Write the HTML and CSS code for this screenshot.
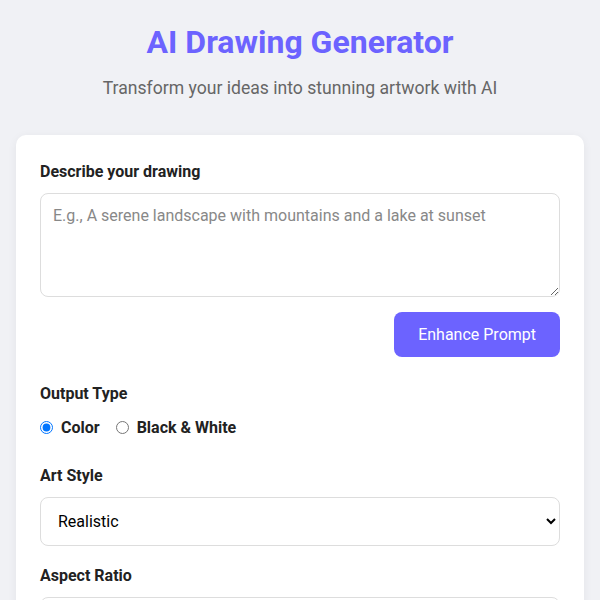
FILE: index.html
```html
<!DOCTYPE html>
<html lang="en">
<head>
<meta charset="utf-8">
<title>AI Drawing Generator</title>
<link rel="stylesheet" href="styles.css">
</head>
<body>
<div class="container">
  <header class="header">
    <h1 class="title">AI Drawing Generator</h1>
    <p class="subtitle">Transform your ideas into stunning artwork with AI</p>
  </header>
  <main class="card">
    <div class="field field-prompt">
      <label class="field-label" for="prompt">Describe your drawing</label>
      <textarea id="prompt" class="textarea" placeholder="E.g., A serene landscape with mountains and a lake at sunset"></textarea>
      <div class="actions">
        <button class="btn-primary" type="button">Enhance Prompt</button>
      </div>
    </div>
    <div class="field">
      <span class="field-label">Output Type</span>
      <div class="radio-row">
        <label class="radio-option"><input type="radio" name="type" checked> Color</label>
        <label class="radio-option"><input type="radio" name="type"> Black &amp; White</label>
      </div>
    </div>
    <div class="field">
      <label class="field-label" for="style">Art Style</label>
      <select id="style" class="select">
        <option>Realistic</option>
        <option>Cartoon</option>
        <option>Watercolor</option>
      </select>
    </div>
    <div class="field">
      <label class="field-label" for="ratio">Aspect Ratio</label>
      <select id="ratio" class="select">
        <option>Square (1:1)</option>
        <option>Portrait (3:4)</option>
      </select>
    </div>
  </main>
</div>
</body>
</html>
```

FILE: styles.css
```css
* { box-sizing: border-box; }

body {
  margin: 0;
  background: #f0f1f5;
  font-family: Roboto, "Liberation Sans", sans-serif;
  color: #222;
}

.container {
  padding: 23px 16px 40px;
}

.header {
  text-align: center;
}

.title {
  margin: 0;
  font-size: 32px;
  line-height: 38px;
  font-weight: 700;
  color: #6c63ff;
}

.subtitle {
  margin: 14px 0 0;
  font-size: 17.6px;
  line-height: 27px;
  color: #666;
}

.card {
  margin-top: 33px;
  background: #fff;
  border-radius: 10px;
  box-shadow: 0 2px 10px rgba(0, 0, 0, 0.06);
  padding: 27px 24px 24px;
}

.field {
  margin-bottom: 20px;
}

.field-label {
  display: block;
  font-size: 16px;
  font-weight: 700;
  color: #222;
  margin-bottom: 12px;
}

.textarea {
  display: block;
  width: 100%;
  height: 104px;
  padding: 12px;
  border: 1px solid #ddd;
  border-radius: 8px;
  font-family: inherit;
  font-size: 16px;
  color: #222;
  resize: vertical;
}

.textarea::placeholder {
  color: #888;
}

.actions {
  display: flex;
  justify-content: flex-end;
  margin-top: 15px;
  margin-bottom: 27px;
}

.btn-primary {
  border: none;
  border-radius: 8px;
  background: #6c63ff;
  color: #fff;
  font-family: inherit;
  font-size: 16px;
  line-height: 21px;
  padding: 12px 24px;
}

.radio-row {
  display: flex;
  align-items: center;
  gap: 16px;
  padding: 3px 0 9px;
}

.radio-option {
  display: flex;
  align-items: center;
  gap: 8px;
  font-size: 16px;
  font-weight: 700;
  color: #222;
}

.radio-option input {
  margin: 0;
}

.select {
  display: block;
  width: 100%;
  height: 49px;
  padding: 0 13px;
  border: 1px solid #ddd;
  border-radius: 8px;
  background: #fff;
  font-family: inherit;
  font-size: 16px;
  color: #000;
}
```
